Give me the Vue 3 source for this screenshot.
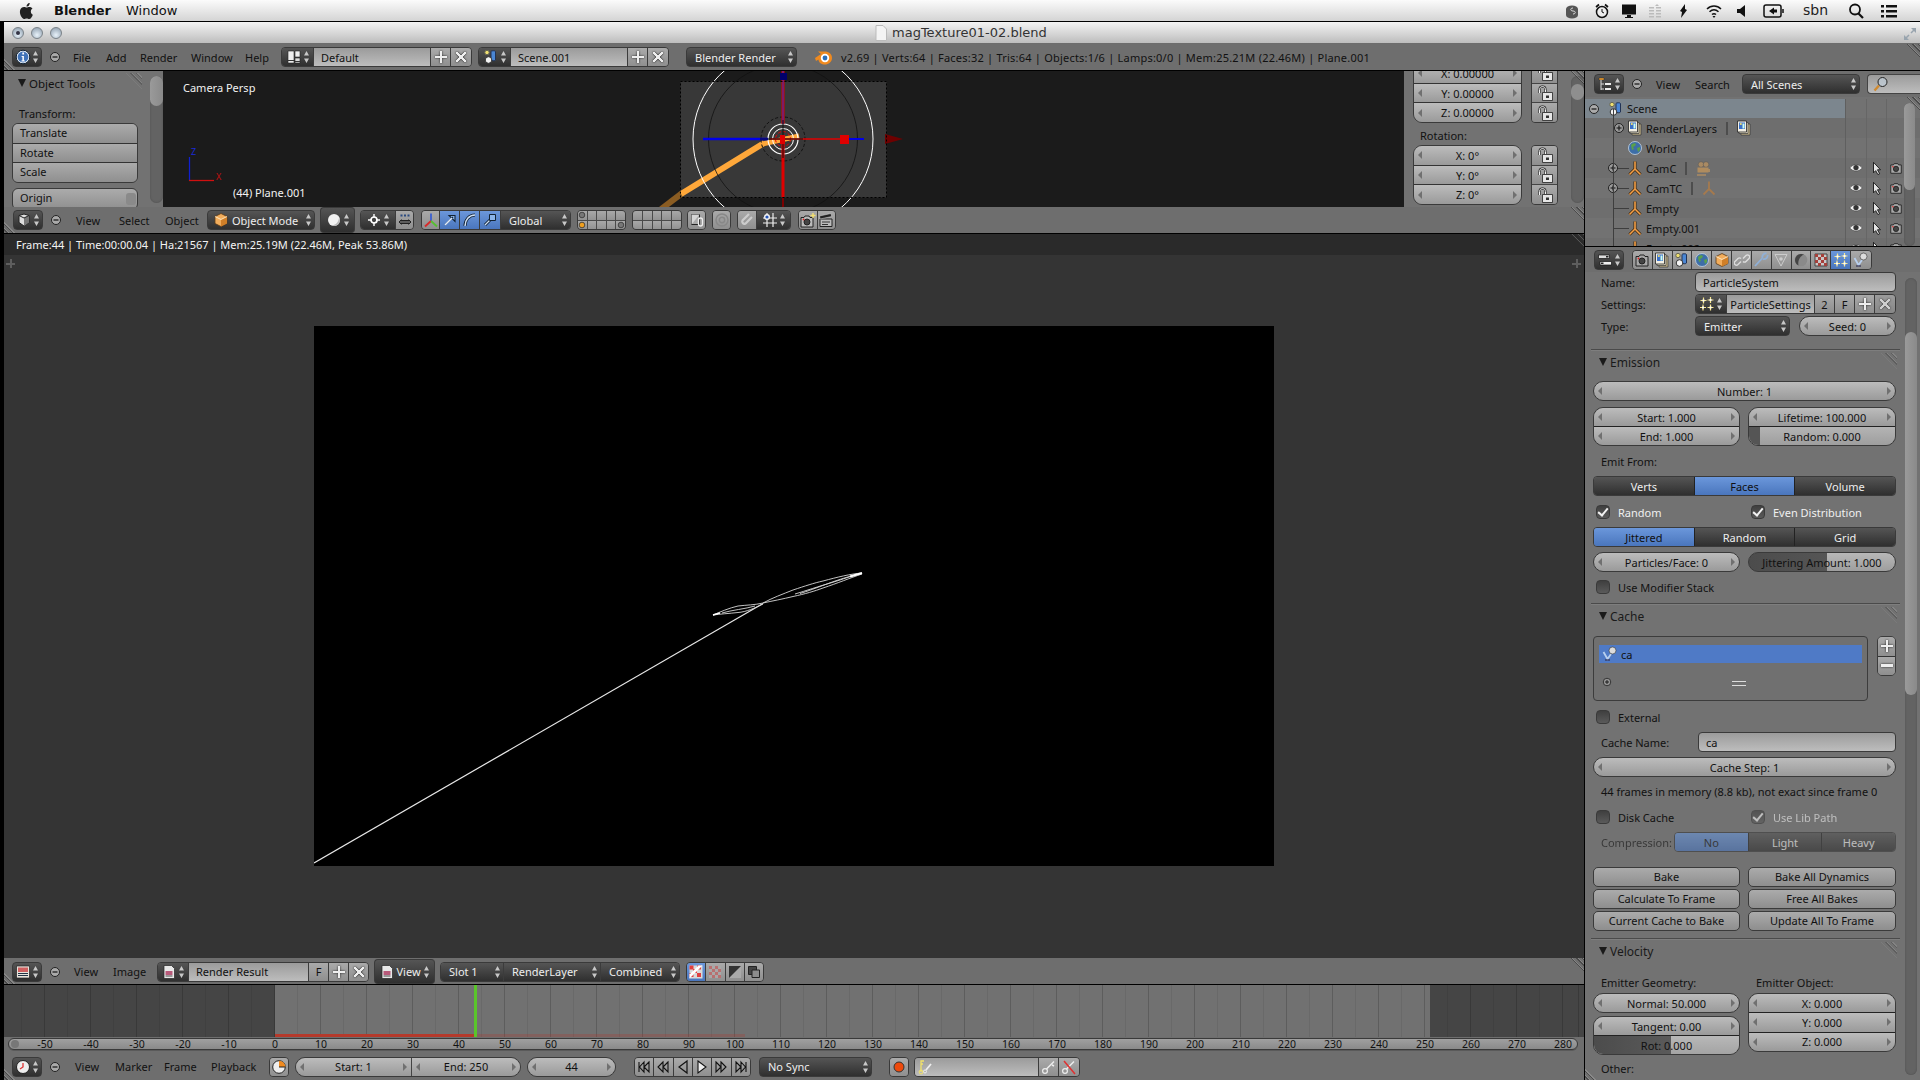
<script setup>
const menus = {
  info: [['File', 33], ['Add', 34], ['Render', 51], ['Window', 54], ['Help', 36]],
  view: [['View', 43], ['Select', 46], ['Object', 42]],
  image: [['View', 39], ['Image', 44]],
  time: [['View', 40], ['Marker', 49], ['Frame', 47], ['Playback', 58]]
}
const locRows = ['X: 0.00000', 'Y: 0.00000', 'Z: 0.00000']
const rotRows = ['X: 0°', 'Y: 0°', 'Z: 0°']
const tree = [
  { name: 'Scene', cls: 'lv0 sel', icon: 'scene', toggle: 'minus' },
  { name: 'RenderLayers', cls: 'lv1', icon: 'layers', toggle: 'plus', extra: 'layers' },
  { name: 'World', cls: 'lv1', icon: 'world' },
  { name: 'CamC', cls: 'lv1 br', icon: 'empty', toggle: 'plus', extra: 'cam', vis: true },
  { name: 'CamTC', cls: 'lv1 br', icon: 'empty', toggle: 'plus', extra: 'emptydim', vis: true },
  { name: 'Empty', cls: 'lv1 br', icon: 'empty', vis: true },
  { name: 'Empty.001', cls: 'lv1 br', icon: 'empty', vis: true },
  { name: 'Empty.002', cls: 'lv1 br', icon: 'empty', vis: true }
]
const tabs = ['render', 'layers', 'scene', 'world', 'cube', 'link', 'wrench', 'vert', 'mat', 'tex', 'spark', 'phys']
const frames = []
for (let f = -50; f <= 280; f += 10) frames.push(f)
const transport = ['first', 'prevkey', 'rev', 'play', 'nextkey', 'last']
const frameCell = 46
</script>

<template>
  <div class="root">
    <svg class="defs" width="0" height="0">
      <defs>
        <symbol id="ud" viewBox="0 0 7 14"><path d="M3.5 1 6 5.5H1zM3.5 13 1 8.5h5z" fill="#c8c8c8"/></symbol>
        <symbol id="info" viewBox="0 0 16 16"><circle cx="8" cy="8" r="6.8" fill="#e9eef5" stroke="#123"/><circle cx="8" cy="8" r="5.4" fill="#3f72b8"/><path d="M6.6 7h2.3v4.4h1v1H6.4v-1h1V8h-.8zM7.3 3.6h1.8v1.8H7.3z" fill="#fff"/></symbol>
        <symbol id="view3d" viewBox="0 0 16 16"><path d="M3 3.5 8 2l5 1.5v7L8 14l-5-3.5z" fill="#ddd" stroke="#222"/><path d="M8 6v8l5-3.5v-7z" fill="#777"/><path d="M3 3.5 8 6l5-2.5" fill="none" stroke="#222"/></symbol>
        <symbol id="layout" viewBox="0 0 16 16"><path d="M2 2h6v12H2z" fill="#eee" stroke="#222" stroke-width=".6"/><path d="M9 2h5v6H9z" fill="#eee" stroke="#222" stroke-width=".6"/><path d="M9 9h5v5H9z" fill="#ddd" stroke="#222" stroke-width=".6"/><path d="M2 11h6v1H2zM9 12h5v1H9z" fill="#333"/></symbol>
        <symbol id="scene" viewBox="0 0 16 16"><circle cx="4" cy="3.5" r="2.2" fill="#f0e070" stroke="#665"/><path d="M8 2.500c0-1 4.500-1 4.500 0V11c0 1-4.500 1-4.500 0z" fill="#4a86d4" stroke="#235"/><circle cx="5.500" cy="11" r="3.300" fill="#f4f4f4" stroke="#333"/></symbol>
        <symbol id="logo" viewBox="0 0 20 18"><path d="M1 10 7 6 4 3.500h6.500C15 3.500 18 6 18 10s-3.500 6.500-7 6.500-6.500-2-6.500-5L2 13z" fill="#f08a1f"/><circle cx="11" cy="10" r="4.200" fill="#fff"/><circle cx="11" cy="10" r="2.400" fill="#2c6fb8"/></symbol>
        <symbol id="cube" viewBox="0 0 16 16"><path d="M8 1.500 14 4.500v7L8 14.500l-6-3v-7z" fill="#f2ad5c" stroke="#5b3a16" stroke-width=".8"/><path d="M8 7.500v7l6-3v-7z" fill="#d07f28"/><path d="M2 4.500l6 3 6-3" fill="none" stroke="#fff3d8" stroke-width=".8"/></symbol>
        <symbol id="ball" viewBox="0 0 16 16"><circle cx="8" cy="8" r="6" fill="#f2f2f2"/><path d="M14 8a6 6 0 0 1-9 5.200C9 13.500 12 11.500 13 6z" fill="#bbb"/></symbol>
        <symbol id="pivot" viewBox="0 0 16 16"><circle cx="8" cy="8" r="3" fill="none" stroke="#fff" stroke-width="1.700"/><path d="M8 2v3.500M8 10.500V14M2 8h3.500M10.500 8H14" stroke="#fff" stroke-width="1.400"/></symbol>
        <symbol id="pickarrows" viewBox="0 0 16 16"><path d="M3.500 2.500h2v2h-2zM7 2.500h2v2H7zM10.500 2.500h2v2h-2z" fill="#2a4a80"/><path d="M2 10h12M4.500 7.500 2 10l2.500 2.500M11.500 7.500 14 10l-2.500 2.500M4 8.500h8M4 11.500h8" stroke="#222" fill="none"/></symbol>
        <symbol id="axes" viewBox="0 0 16 16"><path d="M8 9V1.500" stroke="#3a5fd0" stroke-width="1.800"/><path d="M8 9 2 14.500" stroke="#d82a2a" stroke-width="1.800"/><path d="M8 9 14 14.500" stroke="#55c030" stroke-width="1.800"/></symbol>
        <symbol id="marrow" viewBox="0 0 16 16"><path d="M3 13 11 5M7 3.500h6v6z" stroke="#123" fill="#8ab4ea" stroke-width="1.100"/><path d="M3 13 10 6" stroke="#dfeafa" stroke-width="1.600"/></symbol>
        <symbol id="marc" viewBox="0 0 16 16"><path d="M3 14C3 8 7 3 13 3" fill="none" stroke="#123" stroke-width="3"/><path d="M3 14C3 8 7 3 13 3" fill="none" stroke="#cfe0f6" stroke-width="1.500"/></symbol>
        <symbol id="mscale" viewBox="0 0 16 16"><path d="M3 13 9 7" stroke="#123" stroke-width="3"/><path d="M3 13 9 7" stroke="#cfe0f6" stroke-width="1.300"/><path d="M7.500 2.500h6v6h-6z" fill="#8ab4ea" stroke="#123"/></symbol>
        <symbol id="lockview" viewBox="0 0 16 16"><path d="M2.500 2.500h8v10h-8z" fill="#aaa" stroke="#222"/><path d="M2.500 2.500h8l-8 10z" fill="#d5d5d5"/><rect x="9.500" y="6" width="4" height="8" rx="2" fill="none" stroke="#eee" stroke-width="1.300"/></symbol>
        <symbol id="prop" viewBox="0 0 16 16"><circle cx="8" cy="8" r="6" fill="none" stroke="#888" stroke-width="1.500"/><circle cx="8" cy="8" r="2.700" fill="none" stroke="#888" stroke-width="1.500"/></symbol>
        <symbol id="magnet" viewBox="0 0 16 16"><path d="M12 3 5.500 9.500a2.200 2.200 0 0 0 3 3L15 6" fill="none" stroke="#ccc" stroke-width="2.200" transform="translate(-2 -1)"/></symbol>
        <symbol id="snapgrid" viewBox="0 0 16 16"><path d="M5 1v14M11 1v14M1 6h14M1 11h14" stroke="#eee" stroke-width="1.200"/><circle cx="5" cy="5" r="3" fill="#f2f2f2"/><circle cx="5" cy="5" r="1.600" fill="#2555b8"/></symbol>
        <symbol id="render" viewBox="0 0 16 16"><path d="M2 4.500h3l1-1.500h4l1 1.500h3V14H2z" fill="#a8a8a8" stroke="#222"/><circle cx="8" cy="9" r="3" fill="#444" stroke="#222"/><circle cx="4.500" cy="6.500" r=".9" fill="#d22"/></symbol>
        <symbol id="propsed" viewBox="0 0 16 16"><path d="M1.500 3h11v3.500h-11z" fill="#ddd" stroke="#111" stroke-width=".7"/><path d="M3 9.500h11.500V13H3z" fill="#f0f0f0" stroke="#111" stroke-width=".7"/><path d="M9 4h2.500v1.500H9zM4 10.500h2.500V12H4z" fill="#222"/></symbol>
        <symbol id="renderstar" viewBox="0 0 16 16"><path d="M1 5.500h3l1-1.500h4l1 1.500h3V15H1z" fill="#bbb" stroke="#222"/><circle cx="7" cy="10" r="3" fill="#444" stroke="#222"/><circle cx="3.500" cy="7.500" r=".9" fill="#d22"/><path d="M13 1v5M10.500 3.500h5" stroke="#f4e070" stroke-width="1.400"/></symbol>
        <symbol id="clap" viewBox="0 0 16 16"><path d="M2 7h12v7.500H2z" fill="#bbb" stroke="#222"/><path d="M2 7 1.500 4 13 1.500l.7 3z" fill="#222" stroke="#ddd" stroke-width=".5"/><path d="M4 10h8M4 12.500h6" stroke="#333"/></symbol>
        <symbol id="lock" viewBox="0 0 16 18"><path d="M2.500 9V5.500a3 3 0 0 1 6 0V8" fill="none" stroke="#111" stroke-width="2"/><path d="M2.500 9V5.500a3 3 0 0 1 6 0V8" fill="none" stroke="#f2f2f2" stroke-width="1"/><path d="M5.500 8.500h10v8h-10z" fill="#e6e6e6" stroke="#222" stroke-width=".8"/><rect x="9" y="11.500" width="3" height="2.500" fill="#333"/></symbol>
        <symbol id="oliner" viewBox="0 0 16 16"><path d="M2 2h5v2H2z" fill="#f0a030" stroke="#222" stroke-width=".4"/><path d="M4 4v10M4 8h3M4 13h3" stroke="#ddd"/><path d="M8 7h6v2H8zM8 12h6v2H8z" fill="#eee"/></symbol>
        <symbol id="searchg" viewBox="0 0 16 16"><circle cx="9.500" cy="6" r="4.500" fill="#cde" fill-opacity=".5" stroke="#222"/><path d="M6 9.500 1.500 14.500" stroke="#d08a30" stroke-width="2.400"/></symbol>
        <symbol id="minus" viewBox="0 0 12 12"><circle cx="6" cy="6" r="4.500" fill="#aaa" stroke="#222"/><path d="M3.500 6h5" stroke="#111" stroke-width="1.200"/></symbol>
        <symbol id="plus" viewBox="0 0 12 12"><circle cx="6" cy="6" r="4.500" fill="#999" stroke="#222"/><path d="M3.500 6h5M6 3.500v5" stroke="#111" stroke-width="1.100"/></symbol>
        <symbol id="layers" viewBox="0 0 16 16"><path d="M5 4h9v11H5z" fill="#c9b98d" stroke="#333" stroke-width=".7"/><path d="M3 2.500h9v11H3z" fill="#e7dfc8" stroke="#333" stroke-width=".7"/><path d="M1.500 1h9v11h-9z" fill="#f4f0e4" stroke="#222" stroke-width=".8"/><path d="M3 2.500h6V9H3z" fill="#3a70c8"/><circle cx="4.800" cy="4" r="1.100" fill="#f4e070"/><path d="M6.500 3.500h2v5h-2z" fill="#cfe"/></symbol>
        <symbol id="world" viewBox="0 0 16 16"><circle cx="8" cy="8" r="6.500" fill="#3d6ea8" stroke="#bcd" stroke-width=".9"/><path d="M4 5c2-2 4-2 5-1l-1 2-2 1 1 2-2 1zM10 8l3-1 0 3-2 2z" fill="#5aa14a"/></symbol>
        <symbol id="empty" viewBox="0 0 16 16"><path d="M8 1.500V9L2.500 14.500M8 9l5.500 5.500" fill="none" stroke="#3c2408" stroke-width="3"/><path d="M8 1.500V9L2.500 14.500M8 9l5.500 5.500" fill="none" stroke="#f3a04a" stroke-width="1.600"/></symbol>
        <symbol id="emptydim" viewBox="0 0 16 16"><path d="M8 1.500V9L2.500 14.500M8 9l5.500 5.500" fill="none" stroke="#a57a4e" stroke-width="1.800"/></symbol>
        <symbol id="cam" viewBox="0 0 16 16"><circle cx="6" cy="4.500" r="2.800" fill="#a98a63" stroke="#555" stroke-width=".5"/><circle cx="11" cy="4.500" r="2.800" fill="#a98a63" stroke="#555" stroke-width=".5"/><path d="M2.500 7.500h11v5h-11z" fill="#b08c5e"/><path d="M2 15h9" stroke="#a98a63" stroke-width="1.600"/><path d="M14 9v3" stroke="#a98a63" stroke-width="2"/></symbol>
        <symbol id="eye" viewBox="0 0 16 16"><path d="M1 8c3-5 11-5 14 0-3 4.500-11 4.500-14 0z" fill="#eee" stroke="#222" stroke-width=".5"/><circle cx="8" cy="7.500" r="3" fill="#333"/></symbol>
        <symbol id="cursor" viewBox="0 0 16 16"><path d="M4 1.500 12 10H8.500l2.500 4.500-2 1L6.500 11 4 13.500z" fill="#e4e4e4" stroke="#111"/></symbol>
        <symbol id="link" viewBox="0 0 16 16"><path d="M7 9.500 4 12.500a2.100 2.100 0 0 1-3-3l3-3a2.100 2.100 0 0 1 3 0M9 6.500l3-3a2.100 2.100 0 0 1 3 3l-3 3a2.100 2.100 0 0 1-3 0" fill="none" stroke="#ddd" stroke-width="1.400"/></symbol>
        <symbol id="wrench" viewBox="0 0 16 16"><path d="M2 14 9.500 6M13.500 1.500a3.500 3.500 0 0 0-4 4.500M14.500 3a3.500 3.500 0 0 1-4.500 4" fill="none" stroke="#8fb0d8" stroke-width="1.800"/></symbol>
        <symbol id="vert" viewBox="0 0 16 16"><path d="M2 2.500 8 14 14 2.500z" fill="none" stroke="#ccc"/><circle cx="8" cy="7" r="1.800" fill="#ccc"/><path d="M2 2.500h12" stroke="#ccc"/></symbol>
        <symbol id="mat" viewBox="0 0 16 16"><circle cx="8" cy="8" r="6.300" fill="#8a8a8a"/><path d="M2 8a6.300 6.300 0 0 1 9-5.500C7 4 4.500 9 5.500 13.500A6.300 6.300 0 0 1 2 8z" fill="#444"/></symbol>
        <symbol id="tex" viewBox="0 0 16 16"><path d="M2 2h12v12H2z" fill="#c8c8c8" stroke="#444"/><path d="M2 2h3v3H2zM8 2h3v3H8zM5 5h3v3H5zM11 5h3v3h-3zM2 8h3v3H2zM8 8h3v3H8zM5 11h3v3H5zM11 11h3v3h-3z" fill="#a5403a"/></symbol>
        <symbol id="spark" viewBox="0 0 16 16"><path d="M4.500 1.500v6M1.500 4.500h6M11.500 1v6M8.500 4h6M4 8.500v6M1 11.500h6M11.500 8.500v6M8.500 11.500h6" stroke="#f8e890" stroke-width="1.200"/><path d="M3.500 3.500h2v2h-2zM10.500 3h2v2h-2zM3 10.500h2v2H3zM10.500 10.500h2v2h-2z" fill="#fff"/></symbol>
        <symbol id="phys" viewBox="0 0 16 16"><path d="M1.500 6 5.500 13 9 8" fill="none" stroke="#b8cfee" stroke-width="1.800"/><path d="M3 14h5" stroke="#335" stroke-width="1.200"/><circle cx="10.500" cy="4.500" r="3.500" fill="#dcdcdc" stroke="#333" stroke-width=".6"/></symbol>
        <symbol id="uvimg" viewBox="0 0 16 16"><path d="M1.500 2h13v12h-13z" fill="#e8e4dc" stroke="#222" stroke-width=".7"/><path d="M3 3.500h10V8H3z" fill="#d06060"/><path d="M3 9.500h10M3 11.500h10" stroke="#234" stroke-width="1.200"/></symbol>
        <symbol id="img" viewBox="0 0 16 16"><path d="M3 1.500h7.500L13.500 4.500v10H3z" fill="#e8e8e8" stroke="#222" stroke-width=".7"/><path d="M4.500 7h7v4h-7z" fill="#b85a7a"/><path d="M4.500 12h7" stroke="#444"/></symbol>
        <symbol id="checker" viewBox="0 0 16 16"><path d="M1.500 1.500h13v13h-13z" fill="#d9d9d9"/><path d="M1.500 1.500h4v4h-4zM9 1.500h4v4H9zM5 5h4v4H5zM9 9h4v4H9zM1.500 9h4v4h-4z" fill="#e04040"/><path d="M14.500 1.500 1.500 14.500v-4l9-9z" fill="#fff"/></symbol>
        <symbol id="checker2" viewBox="0 0 16 16"><path d="M2 2h12v12H2z" fill="#a8a8a8"/><path d="M2 2h3v3H2zM8 2h3v3H8zM5 5h3v3H5zM11 5h3v3h-3zM2 8h3v3H2zM8 8h3v3H8zM5 11h3v3H5zM11 11h3v3h-3z" fill="#b87070"/></symbol>
        <symbol id="diag" viewBox="0 0 16 16"><path d="M2 2h12v12H2z" fill="#333"/><path d="M14 2v12H2z" fill="#aaa"/></symbol>
        <symbol id="overlap" viewBox="0 0 16 16"><path d="M2.500 2.500h8v8h-8z" fill="#444" stroke="#222"/><path d="M6 6h7.500v7.500H6z" fill="#8c8c8c" stroke="#222"/></symbol>
        <symbol id="clock" viewBox="0 0 16 16"><circle cx="8" cy="8" r="6.500" fill="#eee" stroke="#222"/><path d="M8 4v4l-3 2" stroke="#d33" stroke-width="1.300" fill="none"/></symbol>
        <symbol id="timer" viewBox="0 0 16 16"><circle cx="8" cy="8" r="6.300" fill="#eee" stroke="#222"/><path d="M8 8V1.700A6.300 6.300 0 0 1 14.300 8z" fill="#f08a1f"/><path d="M8 8h6" stroke="#222"/></symbol>
        <symbol id="rec" viewBox="0 0 16 16"><circle cx="8" cy="8" r="5" fill="#ee4a0c" stroke="#333"/></symbol>
        <symbol id="key" viewBox="0 0 16 16"><circle cx="4" cy="12" r="2.400" fill="none" stroke="#eee" stroke-width="1.200"/><path d="M5.500 10 13 2.500M11 6l2 1" stroke="#eee" stroke-width="1.500"/></symbol>
        <symbol id="keyy" viewBox="0 0 16 16"><path d="M3 13V2h3M3 5h2" stroke="#f2e26a" stroke-width="1.300" fill="none"/><circle cx="3" cy="13" r="1.900" fill="none" stroke="#f2e26a"/><path d="M8 11 13 5" stroke="#eee" stroke-width="1.800"/><circle cx="7" cy="12.500" r="1.500" fill="none" stroke="#eee"/></symbol>
        <symbol id="keyx" viewBox="0 0 16 16"><circle cx="4" cy="12" r="2.400" fill="none" stroke="#eee" stroke-width="1.200"/><path d="M5.500 10 13 2.500" stroke="#eee" stroke-width="1.500"/><path d="M3 2 14 15" stroke="#e03030" stroke-width="1.500"/></symbol>
        <symbol id="first" viewBox="0 0 16 16"><path d="M3 3v10M13 3 8 8l5 5zM8 3 3.500 8 8 13z" fill="none" stroke="#111" stroke-width="1.100"/></symbol>
        <symbol id="prevkey" viewBox="0 0 16 16"><path d="M13 3 8 8l5 5zM8 3 3 8l5 5z" fill="none" stroke="#111" stroke-width="1.100"/></symbol>
        <symbol id="rev" viewBox="0 0 16 16"><path d="M12 2 4 8l8 6z" fill="none" stroke="#111" stroke-width="1.200"/></symbol>
        <symbol id="play" viewBox="0 0 16 16"><path d="M4 2l8 6-8 6z" fill="#eee" stroke="#111" stroke-width="1.100"/></symbol>
        <symbol id="nextkey" viewBox="0 0 16 16"><path d="M3 3l5 5-5 5zM8 3l5 5-5 5z" fill="none" stroke="#111" stroke-width="1.100"/></symbol>
        <symbol id="last" viewBox="0 0 16 16"><path d="M13 3v10M3 3l5 5-5 5zM8 3l4.500 5L8 13z" fill="none" stroke="#111" stroke-width="1.100"/></symbol>
        <symbol id="layerdot" viewBox="0 0 10 10"><circle cx="5" cy="5" r="3.500" fill="#777" stroke="#333"/></symbol>
        <symbol id="layerdoto" viewBox="0 0 10 10"><circle cx="5" cy="5" r="3.500" fill="#f0a020" stroke="#333"/></symbol>
      </defs>
    </svg>

    <header class="mac">
      <svg class="apple" viewBox="0 0 16 18"><path d="M11.800 9.500c0-2 1.600-3 1.700-3-1-1.400-2.400-1.600-2.900-1.600-1.200-.1-2.400.7-3 .7-.6 0-1.600-.7-2.600-.7C3.600 4.900 2.300 5.700 1.600 7c-1.400 2.500-.4 6.100 1 8.100.7 1 1.500 2.100 2.500 2 1-.05 1.400-.65 2.600-.65 1.200 0 1.500.65 2.600.6 1.100 0 1.800-1 2.400-2 .8-1.100 1.100-2.200 1.100-2.300-.05 0-2-.8-2-3.250zM9.900 3.500c.55-.65.9-1.600.8-2.500-.8.03-1.800.53-2.300 1.200-.5.57-1 1.500-.85 2.400.9.07 1.800-.45 2.350-1.100z" fill="#222"/></svg>
      <span class="mac-b">Blender</span>
      <span class="mac-t">Window</span>
      <span class="mac-r">
        <svg class="mi m-s" viewBox="0 0 16 16"><path d="M2 6a5 3 0 0 1 12 0v6a5 3 0 0 1-12 0z" fill="#555"/><path d="M9 5c-3 0-3 3 0 3s3 3 0 3" stroke="#ddd" fill="none"/></svg>
        <svg class="mi m-c" viewBox="0 0 16 16"><circle cx="8" cy="9" r="5.500" fill="#eee" stroke="#111" stroke-width="1.500"/><path d="M8 6v3l2 1" stroke="#111" fill="none"/><path d="M2 4 5 1.500M14 4l-3-2.500" stroke="#111" stroke-width="1.700"/></svg>
        <svg class="mi m-d" viewBox="0 0 16 16"><path d="M1 1.500h14v10H1z" fill="#111"/><path d="M6 12h4v2H6zM4 14h8v1H4z" fill="#111"/></svg>
        <svg class="mi m-b" viewBox="0 0 16 16"><path d="M2 4h5v1.500H2zM9 4h5v1.500H9zM2 7h5v1.500H2zM9 7h5v1.500H9zM2 10h5v1.500H2zM9 10h5v1.500H9zM2 13h5v1.500H2zM9 13h5v1.500H9zM10 1l2 2H8z" fill="#bbb"/></svg>
        <svg class="mi m-f" viewBox="0 0 16 16"><path d="M9 1 4 8l2 1-1 6 6-8-2-1z" fill="#111"/></svg>
        <svg class="mi m-w" viewBox="0 0 18 16"><path d="M2 6c4-4 10-4 14 0M4.500 8.800c2.700-2.500 6.300-2.500 9 0M7 11.500c1.300-1.100 2.700-1.100 4 0" stroke="#111" stroke-width="1.500" fill="none"/><path d="M9 15l-1.500-2h3z" fill="#111"/></svg>
        <svg class="mi m-v" viewBox="0 0 12 16"><path d="M2 6h3l5-4v12l-5-4H2z" fill="#111"/></svg>
        <svg class="mi m-k" viewBox="0 0 22 16"><rect x="1" y="2" width="17" height="12" rx="2" fill="none" stroke="#111" stroke-width="1.500"/><path d="M20 6v4" stroke="#111" stroke-width="1.500"/><path d="M6 8l5-3.500v2h3v3h-3v2z" fill="#111"/></svg>
        <span class="m-n">sbn</span>
        <svg class="mi m-q" viewBox="0 0 16 16"><circle cx="7" cy="6.500" r="5" fill="none" stroke="#111" stroke-width="1.800"/><path d="M10.500 10.500 15 15" stroke="#111" stroke-width="2.200"/></svg>
        <svg class="mi m-l" viewBox="0 0 18 16"><path d="M1 2h3v2.500H1zM1 7h3v2.500H1zM1 12h3v2.500H1zM6 2h11v2.500H6zM6 7h11v2.500H6zM6 12h11v2.500H6z" fill="#111"/></svg>
      </span>
    </header>

    <div class="win">
      <div class="title">
        <span class="lights"><i class="l on"></i><i class="l"></i><i class="l"></i></span>
        <span class="title-c">
          <svg class="doc" viewBox="0 0 12 16"><path d="M1 .5h7l3.500 3.500v11.500H1z" fill="#f4f4f4" stroke="#bbb"/></svg>
          <span>magTexture01-02.blend</span>
        </span>
        <svg class="full" viewBox="0 0 16 16"><path d="M9 2h5v5zM7 14H2V9z" fill="#98a4ae"/><path d="M12 4 9 7M4 12l3-3" stroke="#98a4ae" stroke-width="1.500"/></svg>
      </div>

      <div class="hdr h-info">
        <div class="hatch-l"></div>
        <div class="grp dk w30 ml8"><svg class="i"><use href="#info"/></svg><svg class="ud"><use href="#ud"/></svg></div>
        <span class="dotcell w31"><svg class="dot"><use href="#minus"/></svg></span>
        <span v-for="m in menus.info" :key="m[0]" class="menu" :style="{ width: m[1] + 'px' }">{{ m[0] }}</span>
        <div class="grp w191">
          <div class="dk seg w32"><svg class="i"><use href="#layout"/></svg><svg class="ud"><use href="#ud"/></svg></div>
          <div class="fld seg grow"><span class="pl8">Default</span></div>
          <div class="btn seg w20"><b class="add"></b></div>
          <div class="btn seg w20"><b class="x"></b></div>
        </div>
        <div class="grp w191 ml6">
          <div class="dk seg w32"><svg class="i"><use href="#scene"/></svg><svg class="ud"><use href="#ud"/></svg></div>
          <div class="fld seg grow"><span class="pl8">Scene.001</span></div>
          <div class="btn seg w20"><b class="add"></b></div>
          <div class="btn seg w20"><b class="x"></b></div>
        </div>
        <div class="grp dk w111 ml17 drop"><span>Blender Render</span><svg class="ud"><use href="#ud"/></svg></div>
        <svg class="logo"><use href="#logo"/></svg>
        <span class="stats">v2.69 | Verts:64 | Faces:32 | Tris:64 | Objects:1/6 | Lamps:0/0 | Mem:25.21M (22.46M) | Plane.001</span>
        <div class="hatch-r"></div>
      </div>

      <div class="body">
        <div class="left">
          <section class="v3d">
            <div class="v-main">
              <aside class="tools">
                <div class="tools-in">
                  <div class="pan-h"><i class="tri"></i><span>Object Tools</span><div class="hatch-p"></div></div>
                  <div class="lbl t-lbl">Transform:</div>
                  <div class="stack btns">
                    <div class="tb">Translate</div><div class="tb">Rotate</div><div class="tb">Scale</div>
                  </div>
                  <div class="tb origin">Origin<b class="orig-plus"></b></div>
                </div>
                <div class="sbar"><i class="sthumb st-tool"></i></div>
              </aside>
              <div class="vp">
                <span class="vp-t">Camera Persp</span>
                <svg class="vp-svg" width="1241" height="136" viewBox="163 71 1241 136">
                  <rect x="680.500" y="81.500" width="206" height="116" fill="#383838"/>
                  <path d="M660 210 681 194" stroke="#8a5c22" stroke-width="6"/>
                  <path d="M681 194 764 143" stroke="#ffa83a" stroke-width="6"/>
                  <path d="M762 144 799 136" stroke="#ffa83a" stroke-width="5"/>
                  <circle cx="783" cy="139" r="90" fill="none" stroke="#fff" stroke-width="1"/>
                  <circle cx="783" cy="139" r="74.500" fill="none" stroke="#111" stroke-width=".8"/>
                  <circle cx="783" cy="139" r="22" fill="none" stroke="#111" stroke-width="1" stroke-dasharray="3 2"/>
                  <circle cx="783" cy="139" r="15" fill="none" stroke="#fff" stroke-width="1.200"/>
                  <circle cx="783" cy="139" r="10.500" fill="none" stroke="#fff" stroke-width="1"/>
                  <circle cx="783" cy="139" r="7.500" fill="none" stroke="#e00" stroke-width="1" stroke-dasharray="3 2"/>
                  <path d="M783 139V197" stroke="#e00000" stroke-width="3"/>
                  <path d="M783 197V207" stroke="#7a0000" stroke-width="2"/>
                  <path d="M783 71V124" stroke="#e00000" stroke-width="3"/>
                  <path d="M783 71V124" stroke="#2030d0" stroke-width="1"/>
                  <path d="M783 120V158" stroke="#111" stroke-width="1"/>
                  <rect x="780" y="73" width="7" height="7" fill="#00006a"/>
                  <path d="M703 139H768" stroke="#0000e8" stroke-width="2.500"/>
                  <path d="M770 139H864" stroke="#e00000" stroke-width="1.500"/>
                  <path d="M849 139H864" stroke="#0000e8" stroke-width="2"/>
                  <path d="M760 139H803" stroke="#111" stroke-width="1"/>
                  <rect x="840" y="135" width="9" height="9" fill="#e00000"/>
                  <rect x="780" y="135" width="5" height="9" fill="#e00000"/>
                  <path d="M885 134V144L903 139z" fill="#6e0000"/>
                  <rect x="680.500" y="81.500" width="206" height="116" fill="none" stroke="#000" stroke-dasharray="2 2"/>
                  <path d="M189.500 157V180.500" stroke="#1020d0" stroke-width="1.300"/>
                  <path d="M189 180.500H214" stroke="#d01010" stroke-width="1.300"/>
                </svg>
                <span class="ax ax-z">Z</span>
                <span class="ax ax-x">X</span>
                <span class="vp-o">(44) Plane.001</span>
              </div>
              <aside class="npanel">
                <div class="np-in">
                  <div class="np-row">
                    <div class="stack np-stack">
                      <div v-for="r in locRows" :key="r" class="num"><span>{{ r }}</span></div>
                    </div>
                    <div class="stack locks">
                      <div v-for="r in locRows" :key="r" class="lk"><svg class="ilk"><use href="#lock"/></svg></div>
                    </div>
                  </div>
                  <div class="lbl np-lbl">Rotation:</div>
                  <div class="np-row">
                    <div class="stack np-stack">
                      <div v-for="r in rotRows" :key="r" class="num"><span>{{ r }}</span></div>
                    </div>
                    <div class="stack locks">
                      <div v-for="r in rotRows" :key="r" class="lk"><svg class="ilk"><use href="#lock"/></svg></div>
                    </div>
                  </div>
                </div>
                <div class="sbar sb-n"><i class="sthumb st-n"></i></div>
                <div class="hatch-c"></div>
              </aside>
            </div>
            <div class="hdr h-3d">
              <div class="hatch-l"></div>
              <div class="grp dk w30 ml9"><svg class="i"><use href="#view3d"/></svg><svg class="ud"><use href="#ud"/></svg></div>
              <span class="dotcell w33"><svg class="dot"><use href="#minus"/></svg></span>
              <span v-for="m in menus.view" :key="m[0]" class="menu" :style="{ width: m[1] + 'px' }">{{ m[0] }}</span>
              <div class="grp dk w108 drop dm"><svg class="i"><use href="#cube"/></svg><span class="grow pl3">Object Mode</span><svg class="ud"><use href="#ud"/></svg></div>
              <div class="grp dk w35 ml5 seg"><svg class="i"><use href="#ball"/></svg><svg class="ud"><use href="#ud"/></svg></div>
              <div class="grp w54 ml5">
                <div class="dk seg w35"><svg class="i"><use href="#pivot"/></svg><svg class="ud"><use href="#ud"/></svg></div>
                <div class="btn seg grow"><svg class="i"><use href="#pickarrows"/></svg></div>
              </div>
              <div class="grp w150 ml7">
                <div class="btn seg w18"><svg class="i"><use href="#axes"/></svg></div>
                <div class="blue seg w20"><svg class="i"><use href="#marrow"/></svg></div>
                <div class="blue seg w20"><svg class="i"><use href="#marc"/></svg></div>
                <div class="blue seg w21"><svg class="i"><use href="#mscale"/></svg></div>
                <div class="dk seg grow drop"><span>Global</span><svg class="ud"><use href="#ud"/></svg></div>
              </div>
              <div class="lay w49 ml6">
                <i class="c"><svg class="i8"><use href="#layerdot"/></svg></i><i class="c"></i><i class="c"></i><i class="c"></i><i class="c"></i>
                <i class="c"><svg class="i8"><use href="#layerdoto"/></svg></i><i class="c"></i><i class="c"></i><i class="c"></i><i class="c"><svg class="i8"><use href="#layerdot"/></svg></i>
              </div>
              <div class="lay w50 ml6">
                <i class="c" v-for="n in 10" :key="n"></i>
              </div>
              <div class="grp w19 ml5"><div class="btn seg grow"><svg class="i"><use href="#lockview"/></svg></div></div>
              <div class="grp w19 ml6"><div class="btn seg grow"><svg class="i"><use href="#prop"/></svg></div></div>
              <div class="grp w54 ml6">
                <div class="btn seg w19"><svg class="i"><use href="#magnet"/></svg></div>
                <div class="dk seg grow"><svg class="i"><use href="#snapgrid"/></svg><svg class="ud"><use href="#ud"/></svg></div>
              </div>
              <div class="grp w38 ml7">
                <div class="btn seg grow"><svg class="i"><use href="#renderstar"/></svg></div>
                <div class="btn seg grow"><svg class="i"><use href="#clap"/></svg></div>
              </div>
              <div class="hatch-r"></div>
            </div>
          </section>

          <section class="img">
            <div class="img-bar">Frame:44 | Time:00:00.04 | Ha:21567 | Mem:25.19M (22.46M, Peak 53.86M)</div>
            <i class="cplus cp-l"></i><i class="cplus cp-r"></i>
            <div class="img-c">
              <svg class="result" width="960" height="540" viewBox="314 326 960 540">
                <rect x="314" y="326" width="960" height="540" fill="#000"/>
                <path d="M314 863 763 603.500" fill="none" stroke="#e8e8e8" stroke-width="1.200"/>
                <g fill="none" stroke="#d8d8d8" stroke-width=".9">
                  <path d="M763 603C772 598 783 594 793 590C805 586 814 583 823 581C838 577 850 574 862 573"/>
                  <path d="M763 603C772 601 783 599 793 596.500C805 594 815 591 823 588C838 583 850 578 862 574"/>
                  <path d="M795 594C805 591 820 586 832 582.500S850 576 862 573.500"/>
                  <path d="M800 593.500C815 589 835 580 855 575"/>
                  <path d="M763 603C755 605 746 605 738 606C729 608 720 612 713 615"/>
                  <path d="M763 604C755 608 746 612 738 612.500C729 613.500 720 614 713 615"/>
                  <path d="M722 613C732 610 745 609 755 606"/>
                </g>
                <path d="M850 576.500 862 573" stroke="#fff" stroke-width="2.200"/>
                <path d="M713 615 720 613" stroke="#fff" stroke-width="1.600"/>
              </svg>
            </div>
            <div class="hatch-i"></div>
          </section>
          <div class="hdr h-img">
            <div class="hatch-l"></div>
            <div class="grp dk w30 ml8"><svg class="i"><use href="#uvimg"/></svg><svg class="ud"><use href="#ud"/></svg></div>
            <span class="dotcell w32"><svg class="dot"><use href="#minus"/></svg></span>
            <span v-for="m in menus.image" :key="m[0]" class="menu" :style="{ width: m[1] + 'px' }">{{ m[0] }}</span>
            <div class="grp w212">
              <div class="dk seg w31"><svg class="i"><use href="#img"/></svg><svg class="ud"><use href="#ud"/></svg></div>
              <div class="fld seg w120"><span class="pl8">Render Result</span></div>
              <div class="btn seg w20"><span>F</span></div>
              <div class="btn seg w20"><b class="add"></b></div>
              <div class="btn seg grow"><b class="x"></b></div>
            </div>
            <div class="grp dk w61 ml5 seg"><svg class="i"><use href="#img"/></svg><span class="wt">View</span><svg class="ud"><use href="#ud"/></svg></div>
            <div class="grp w240 ml5">
              <div class="dk seg w63 drop"><span>Slot 1</span><svg class="ud"><use href="#ud"/></svg></div>
              <div class="dk seg w97 drop"><span>RenderLayer</span><svg class="ud"><use href="#ud"/></svg></div>
              <div class="dk seg grow drop"><span>Combined</span><svg class="ud"><use href="#ud"/></svg></div>
            </div>
            <div class="grp w78 ml6">
              <div class="blue seg grow"><svg class="i"><use href="#checker"/></svg></div>
              <div class="btn seg grow"><svg class="i"><use href="#checker2"/></svg></div>
              <div class="btn seg grow"><svg class="i"><use href="#diag"/></svg></div>
              <div class="btn seg grow"><svg class="i"><use href="#overlap"/></svg></div>
            </div>
            <div class="hatch-r"></div>
          </div>

          <section class="time">
            <div class="tl">
              <i class="tl-dk tl-a"></i><i class="tl-mid"></i><i class="tl-dk tl-b"></i>
              <i class="tl-grid"></i>
              <i class="tl-bar"></i><i class="tl-fade"></i><i class="tl-cur"></i>
            </div>
            <div class="ruler-wrap">
              <div class="ruler">
                <span v-for="f in frames" :key="f" class="tick" :style="{ width: frameCell + 'px' }">{{ f }}</span>
              </div>
            </div>
            <div class="hdr h-time">
              <div class="hatch-l"></div>
              <div class="grp dk w30 ml8"><svg class="i"><use href="#clock"/></svg><svg class="ud"><use href="#ud"/></svg></div>
              <span class="dotcell w33"><svg class="dot"><use href="#minus"/></svg></span>
              <span v-for="m in menus.time" :key="m[0]" class="menu" :style="{ width: m[1] + 'px' }">{{ m[0] }}</span>
              <div class="grp w20"><div class="btn seg grow"><svg class="i"><use href="#timer"/></svg></div></div>
              <div class="numg w226 ml6">
                <div class="num inl w116"><span>Start: 1</span></div>
                <div class="num inl grow"><span>End: 250</span></div>
              </div>
              <div class="numg w89 ml6"><div class="num inl grow"><span>44</span></div></div>
              <div class="grp w117 ml18">
                <div v-for="t in transport" :key="t" class="btn seg grow"><svg class="i"><use :href="'#' + t"/></svg></div>
              </div>
              <div class="grp dk w113 ml8 drop"><span>No Sync</span><svg class="ud"><use href="#ud"/></svg></div>
              <div class="grp w20 ml17"><div class="btn seg grow"><svg class="i"><use href="#rec"/></svg></div></div>
              <div class="grp w166 ml5">
                <div class="fld seg grow ks"><svg class="i"><use href="#keyy"/></svg></div>
                <div class="btn seg w20"><svg class="i"><use href="#key"/></svg></div>
                <div class="btn seg w20"><svg class="i"><use href="#keyx"/></svg></div>
              </div>
            </div>
          </section>
        </div>

        <div class="right">
          <section class="outl">
            <div class="hdr h-ol">
              <div class="grp dk w30 ml9"><svg class="i"><use href="#oliner"/></svg><svg class="ud"><use href="#ud"/></svg></div>
              <span class="dotcell w32"><svg class="dot"><use href="#minus"/></svg></span>
              <span class="menu w39">View</span>
              <span class="menu w47">Search</span>
              <div class="grp dk w118 drop"><span>All Scenes</span><svg class="ud"><use href="#ud"/></svg></div>
              <div class="search"><svg class="i"><use href="#searchg"/></svg></div>
            </div>
            <div class="tree">
              <div v-for="r in tree" :key="r.name" class="tr" :class="r.cls">
                <svg v-if="r.toggle" class="tg"><use :href="'#' + r.toggle"/></svg>
                <svg class="i main"><use :href="'#' + r.icon"/></svg>
                <span class="tn">{{ r.name }}</span>
                <template v-if="r.extra"><i class="tsep"></i><svg class="i"><use :href="'#' + r.extra"/></svg></template>
                <div class="cols">
                  <span v-if="r.vis" class="colc"><svg class="i14"><use href="#eye"/></svg></span>
                  <span v-if="r.vis" class="colc"><svg class="i14"><use href="#cursor"/></svg></span>
                  <span v-if="r.vis" class="colc c3"><svg class="i14"><use href="#render"/></svg></span>
                </div>
              </div>
              <div class="sbar sb-o"><i class="sthumb st-o"></i></div>
              <div class="hatch-c"></div>
            </div>
          </section>

          <section class="props">
            <div class="hdr h-pr">
              <div class="grp dk w30 ml9"><svg class="i"><use href="#propsed"/></svg><svg class="ud"><use href="#ud"/></svg></div>
              <div class="grp tabs ml8">
                <div v-for="t in tabs" :key="t" class="seg tab" :class="t === 'spark' ? 'blue' : 'btn'"><svg class="i"><use :href="'#' + t"/></svg></div>
              </div>
            </div>
            <div class="pp">
              <div class="r lr"><span class="k">Name:</span><div class="fld f-name">ParticleSystem</div></div>
              <div class="r lr mt2"><span class="k">Settings:</span>
                <div class="grp f-name">
                  <div class="dk seg w31"><svg class="i"><use href="#spark"/></svg><svg class="ud"><use href="#ud"/></svg></div>
                  <div class="fld seg grow ctr">ParticleSettings</div>
                  <div class="btn seg w20"><span>2</span></div>
                  <div class="btn seg w20"><span>F</span></div>
                  <div class="btn seg w20"><b class="add"></b></div>
                  <div class="btn seg w20 dimmed"><b class="x"></b></div>
                </div>
              </div>
              <div class="r lr mt2"><span class="k">Type:</span>
                <div class="grp dk w95 drop"><span>Emitter</span><svg class="ud"><use href="#ud"/></svg></div>
                <div class="num w97 ml9"><span>Seed: 0</span></div>
              </div>

              <div class="sec s-em">
                <div class="sec-h"><i class="tri"></i><span>Emission</span><div class="hatch-p"></div></div>
                <div class="num w303 mt7"><span>Number: 1</span></div>
                <div class="cols2 mt6">
                  <div class="stack h39"><div class="num"><span>Start: 1.000</span></div><div class="num"><span>End: 1.000</span></div></div>
                  <div class="stack h39"><div class="num"><span>Lifetime: 100.000</span></div><div class="num sl sl-r"><span>Random: 0.000</span></div></div>
                </div>
                <div class="r lbl-r mt5"><span class="k">Emit From:</span></div>
                <div class="rb mt5"><div class="dk seg grow">Verts</div><div class="blue seg grow dt">Faces</div><div class="dk seg grow">Volume</div></div>
                <div class="cols2 mt6 h20">
                  <div class="chk on"><i class="box"></i><span>Random</span></div>
                  <div class="chk on"><i class="box"></i><span>Even Distribution</span></div>
                </div>
                <div class="rb mt5"><div class="blue seg grow dt">Jittered</div><div class="dk seg grow">Random</div><div class="dk seg grow">Grid</div></div>
                <div class="cols2 mt5">
                  <div class="num"><span>Particles/Face: 0</span></div>
                  <div class="num sl sl-j"><span>Jittering Amount: 1.000</span></div>
                </div>
                <div class="chk dkt mt5"><i class="box"></i><span>Use Modifier Stack</span></div>
              </div>

              <div class="sec s-ca">
                <div class="sec-h"><i class="tri"></i><span>Cache</span><div class="hatch-p"></div></div>
                <div class="list-r mt8">
                  <div class="list">
                    <div class="li"><svg class="i"><use href="#phys"/></svg><span>ca</span></div>
                    <div class="lf"><svg class="lfp"><use href="#plus"/></svg><i class="grip"></i></div>
                  </div>
                  <div class="stack pm"><div class="btn seg grow"><b class="add"></b></div><div class="btn seg grow"><b class="sub"></b></div></div>
                </div>
                <div class="chk dkt mt6"><i class="box"></i><span>External</span></div>
                <div class="r lr mt5"><span class="k">Cache Name:</span><div class="fld f-cn">ca</div></div>
                <div class="num w303 mt5"><span>Cache Step: 1</span></div>
                <div class="note">44 frames in memory (8.8 kb), not exact since frame 0</div>
                <div class="cols2 h20 mt5">
                  <div class="chk dkt"><i class="box"></i><span>Disk Cache</span></div>
                  <div class="chk on dis"><i class="box"></i><span>Use Lib Path</span></div>
                </div>
                <div class="r lr mt5 dis">
                  <span class="k k-c">Compression:</span>
                  <div class="rb comp"><div class="blue seg grow dt">No</div><div class="dk seg grow">Light</div><div class="dk seg grow">Heavy</div></div>
                </div>
                <div class="cols2 mt15"><div class="pb">Bake</div><div class="pb">Bake All Dynamics</div></div>
                <div class="cols2 mt2"><div class="pb">Calculate To Frame</div><div class="pb">Free All Bakes</div></div>
                <div class="cols2 mt2"><div class="pb">Current Cache to Bake</div><div class="pb">Update All To Frame</div></div>
              </div>

              <div class="sec s-ve">
                <div class="sec-h"><i class="tri"></i><span>Velocity</span><div class="hatch-p"></div></div>
                <div class="cols2 mt-l"><div class="k kk">Emitter Geometry:</div><div class="k kk">Emitter Object:</div></div>
                <div class="cols2 vel">
                  <div class="vel-l">
                    <div class="num"><span>Normal: 50.000</span></div>
                    <div class="stack h39 mt3"><div class="num"><span>Tangent: 0.00</span></div><div class="num sl sl-t"><span>Rot: 0.000</span></div></div>
                  </div>
                  <div class="stack h59"><div class="num"><span>X: 0.000</span></div><div class="num"><span>Y: 0.000</span></div><div class="num"><span>Z: 0.000</span></div></div>
                </div>
                <div class="k kk mt-o">Other:</div>
              </div>
            </div>
            <div class="sbar sb-p"><i class="sthumb st-p"></i></div>
            <div class="hatch-bl"></div>
          </section>
        </div>
      </div>
    </div>
  </div>
</template>

<style>
html, body { margin: 0; background: #000; }
</style>

<style scoped>
.root { width: 1920px; height: 1080px; overflow: hidden; display: flex; flex-direction: column; font-family: "Noto Sans", "Open Sans", sans-serif; font-size: 11px; color: #111; position: relative; }
.defs { position: absolute; }
.mac { height: 21px; flex: none; display: flex; align-items: center; background: linear-gradient(#fbfbfb, #d4d4d4); border-bottom: 1px solid #000; font-family: "DejaVu Sans", sans-serif; box-sizing: content-box; position: relative; }
.apple { width: 16px; height: 18px; margin-left: 19px; }
.mac-b { font-weight: 700; font-size: 13px; margin-left: 19px; color: #111; width: 72px; }
.mac-t { font-size: 13px; color: #111; }
.mac-r { display: flex; align-items: center; position: absolute; left: 0; top: 0; width: 1920px; height: 21px; pointer-events: none; }
.mi { height: 16px; width: 16px; position: absolute; top: 3px; }
.m-s { left: 1564px; } .m-c { left: 1594px; } .m-d { left: 1621px; } .m-b { left: 1647px; } .m-f { left: 1676px; } .m-w { left: 1705px; width: 18px; } .m-v { left: 1735px; width: 12px; } .m-k { left: 1763px; width: 22px; } .m-q { left: 1848px; } .m-l { left: 1880px; width: 18px; }
.m-n { position: absolute; left: 1803px; top: 2px; font-size: 14px; color: #222; }
.win { flex: 1; min-height: 0; display: flex; flex-direction: column; border-left: 4px solid #000; background: #000; }
.title { height: 22px; flex: none; display: flex; align-items: center; position: relative; background: linear-gradient(#f4f4f4, #bdbdbd); border-bottom: 1px solid #6d6d6d; box-sizing: border-box; }
.lights { display: flex; gap: 7px; margin-left: 8px; }
.l { width: 12px; height: 12px; border-radius: 50%; background: radial-gradient(circle at 50% 70%, #e8f2fa, #8898a8); border: 1px solid #7a8288; box-sizing: border-box; position: relative; display: block; }
.l.on::after { content: ""; position: absolute; left: 3px; top: 3px; width: 4px; height: 4px; border-radius: 50%; background: #334; }
.title-c { position: absolute; left: 871px; top: 0; height: 21px; display: flex; align-items: center; font-family: "DejaVu Sans", sans-serif; font-size: 13px; color: #333; gap: 5px; }
.doc { width: 12px; height: 16px; }
.full { position: absolute; left: 1898px; top: 4px; width: 16px; height: 16px; }

.hdr { height: 26px; flex: none; display: flex; align-items: center; background: #6e6e6e; position: relative; font-size: 11px; }
.h-info { height: 27px; border-bottom: 1px solid #000; box-sizing: border-box; }
.body { flex: 1; min-height: 0; display: flex; }
.left { width: 1580px; flex: none; display: flex; flex-direction: column; }
.right { width: 335px; flex: none; margin-left: 1px; display: flex; flex-direction: column; }

.grp { height: 20px; display: flex; border: 1px solid #3a3a3a; border-radius: 4px; overflow: hidden; box-sizing: border-box; flex: none; }
.seg { display: flex; align-items: center; justify-content: center; height: 100%; box-sizing: border-box; border-right: 1px solid #3c3c3c; min-width: 0; }
.seg:last-child { border-right: 0; }
.grow { flex: 1; min-width: 0; }
.dk { background: linear-gradient(#555, #2f2f2f); color: #eee; display: flex; align-items: center; justify-content: center; }
.grp.dk { justify-content: center; }
.btn { background: linear-gradient(#aaa, #8f8f8f); color: #111; }
.blue { background: linear-gradient(#6b97db, #4a76bd); color: #eee; }
.dt { color: #111; }
.fld { background: linear-gradient(#9b9b9b, #bdbdbd); color: #111; justify-content: flex-start; }
.drop { justify-content: space-between; padding: 0 2px 0 8px; }
.drop.dk { justify-content: space-between; }
.drop > span:not(.grow) { flex: 1; }
.dm { padding-left: 5px; }
.i { width: 16px; height: 16px; flex: none; }
.i14 { width: 14px; height: 14px; }
.ilk { width: 16px; height: 18px; }
.i8 { width: 8px; height: 8px; display: block; }
.ud { width: 7px; height: 14px; flex: none; margin-left: 1px; }
.dot { width: 12px; height: 12px; }
.dotcell { display: flex; justify-content: flex-start; padding-left: 7px; box-sizing: border-box; flex: none; }
.menu { color: #111; padding-left: 0; flex: none; white-space: nowrap; }
.pl8 { padding-left: 7px; } .pl3 { padding-left: 3px; text-align: left; }
.wt { color: #eee; margin: 0 1px; }
.w18{width:18px}.w19{width:19px}.w20{width:20px}.w21{width:21px}.w30{width:30px}.w31{width:31px}.w32{width:32px}.w33{width:33px}.w35{width:35px}.w38{width:38px}.w39{width:39px}.w47{width:47px}.w49{width:49px}.w50{width:50px}.w54{width:54px}.w61{width:61px}.w63{width:63px}.w78{width:78px}.w89{width:89px}.w95{width:95px}.w97{width:97px}.w108{width:108px}.w111{width:111px}.w113{width:113px}.w116{width:116px}.w117{width:117px}.w118{width:118px}.w120{width:120px}.w150{width:150px}.w166{width:166px}.w191{width:191px}.w212{width:212px}.w226{width:226px}.w240{width:240px}.w303{width:303px}
.ml5{margin-left:5px}.ml6{margin-left:6px}.ml7{margin-left:7px}.ml8{margin-left:8px}.ml9{margin-left:9px}.ml17{margin-left:17px}.ml18{margin-left:18px}
.mt2{margin-top:2px}.mt3{margin-top:3px}.mt5{margin-top:5px}.mt6{margin-top:6px}.mt7{margin-top:7px}.mt8{margin-top:8px}.mt15{margin-top:15px}

.lay { height: 20px; flex: none; display: grid; grid-template-columns: repeat(5, 1fr); grid-template-rows: 1fr 1fr; border: 1px solid #3a3a3a; border-radius: 4px; overflow: hidden; box-sizing: border-box; background: #4a4a4a; gap: 1px; }
.c { background: linear-gradient(#a8a8a8, #929292); display: flex; align-items: center; justify-content: center; min-width: 0; min-height: 0; overflow: hidden; }

b.add, b.x, b.sub { display: block; width: 12px; height: 12px; position: relative; }
b.add { background: linear-gradient(#eee, #eee) center/12px 2px no-repeat, linear-gradient(#eee, #eee) center/2px 12px no-repeat; filter: drop-shadow(0 0 1px #222); }
b.x { width: 10px; height: 10px; background: linear-gradient(45deg, transparent 42%, #eee 42%, #eee 58%, transparent 58%), linear-gradient(-45deg, transparent 42%, #eee 42%, #eee 58%, transparent 58%); filter: drop-shadow(0 0 1px #222); }
b.sub { background: linear-gradient(#eee, #eee) center/12px 3px no-repeat; filter: drop-shadow(0 0 1px #222); }
.dimmed { opacity: .75; }
.logo { width: 20px; height: 18px; margin-left: 17px; flex: none; }
.stats { margin-left: 7px; color: #111; white-space: nowrap; letter-spacing: .02em; }

.hatch-l, .hatch-r, .hatch-p, .hatch-c, .hatch-i, .hatch-bl { position: absolute; width: 14px; height: 14px; background: repeating-linear-gradient(45deg, transparent 0 2px, rgba(50,50,50,.6) 2px 3px, rgba(190,190,190,.3) 3px 4px); pointer-events: none; }
.hatch-l { left: 0; bottom: 0; clip-path: polygon(0 0, 100% 100%, 0 100%); }
.hatch-r { right: 0; top: 0; clip-path: polygon(0 0, 100% 0, 100% 100%); }
.hatch-p { right: 8px; top: 2px; background: repeating-linear-gradient(45deg, transparent 0 2px, rgba(60,60,60,.35) 2px 3px, rgba(170,170,170,.3) 3px 4px); width: 16px; height: 16px; clip-path: polygon(0 0, 100% 0, 100% 100%); }
.hatch-c { right: 0; top: 0; clip-path: polygon(0 0, 100% 0, 100% 100%); }
.hatch-i { right: 0; top: 0; clip-path: polygon(0 0, 100% 0, 100% 100%); }
.hatch-bl { left: 0; bottom: 0; clip-path: polygon(0 0, 100% 100%, 0 100%); }

.v3d { height: 162px; flex: none; display: flex; flex-direction: column; border-bottom: 1px solid #000; box-sizing: content-box; }
.v-main { height: 136px; flex: none; display: flex; }
.tools { width: 159px; flex: none; display: flex; background: #727272; overflow: hidden; position: relative; }
.tools-in { width: 142px; padding-left: 8px; box-sizing: border-box; flex: none; position: relative; }
.pan-h { height: 24px; display: flex; align-items: center; font-size: 11.500px; color: #111; position: relative; gap: 3px; padding-left: 6px; }
.tri { width: 0; height: 0; border-left: 4px solid transparent; border-right: 4px solid transparent; border-top: 8px solid #1a1a1a; display: block; }
.pan-h .hatch-p { right: 4px; top: 2px; }
.lbl { color: #111; }
.t-lbl { height: 18px; line-height: 18px; margin-top: 10px; padding-left: 7px; }
.stack { display: flex; flex-direction: column; border-radius: 9px; }
.btns { width: 126px; border: 1px solid #3a3a3a; border-radius: 6px; overflow: hidden; box-sizing: border-box; height: 60px; }
.tb { height: 20px; line-height: 18px; padding-left: 7px; box-sizing: border-box; background: linear-gradient(#ababab, #8f8f8f); border-bottom: 1px solid #333; color: #111; flex: 1; }
.btns .tb:last-child { border-bottom: 0; }
.origin { width: 126px; margin-top: 5px; border: 1px solid #3a3a3a; border-radius: 6px; position: relative; height: 22px; }
.orig-plus { position: absolute; right: 1px; top: 4px; width: 10px; height: 12px; background: #8a8a8a; border-radius: 3px; }
.sbar { width: 13px; margin: 5px 0 4px 4px; background: #636363; border-radius: 7px; flex: none; position: relative; box-shadow: inset 0 0 2px #4c4c4c; }
.sthumb { position: absolute; left: 0; right: 0; background: linear-gradient(90deg, #9a9a9a, #8a8a8a); border-radius: 7px; display: block; }
.st-tool { top: 0; height: 30px; }

.vp { flex: 1; background: #1b1b1b; position: relative; overflow: hidden; }
.vp-svg { position: absolute; left: 0; top: 0; }
.vp-t { position: absolute; left: 20px; top: 9px; color: #f2f2f2; z-index: 1; }
.vp-o { position: absolute; left: 70px; top: 114px; color: #f2f2f2; z-index: 1; }
.ax { position: absolute; font-size: 9px; z-index: 1; }
.ax-z { left: 28px; top: 74px; color: #1a2ad8; }
.ax-x { left: 53px; top: 99px; color: #c01010; }
.npanel { width: 180px; flex: none; background: #727272; display: flex; position: relative; overflow: hidden; }
.np-in { width: 158px; padding-left: 9px; margin-top: -8px; box-sizing: border-box; flex: none; }
.np-row { display: flex; }
.np-stack { width: 109px; border: 1px solid #3a3a3a; border-radius: 9px; overflow: hidden; box-sizing: border-box; flex: none; height: 60px; }
.np-stack .num { border: 0; border-radius: 0; border-bottom: 1px solid #333; flex: 1; height: auto; }
.np-stack .num:last-child { border-bottom: 0; }
.locks { margin-left: 9px; width: 27px; border: 1px solid #3a3a3a; border-radius: 4px; overflow: hidden; box-sizing: border-box; height: 60px; flex: none; }
.lk { flex: 1; background: linear-gradient(#aaa, #8f8f8f); border-bottom: 1px solid #444; display: flex; align-items: center; justify-content: center; overflow: hidden; min-height: 0; }
.lk:last-child { border-bottom: 0; }
.np-lbl { height: 22px; line-height: 26px; padding-left: 7px; }
.sb-n { margin: 5px 0 4px 9px; }
.st-n { top: 8px; height: 16px; background: #8e8e8e; }

.num { height: 20px; background: linear-gradient(#bcbcbc, #9a9a9a); border: 1px solid #3a3a3a; border-radius: 10px; box-sizing: border-box; position: relative; display: flex; align-items: center; justify-content: center; color: #111; flex: none; white-space: nowrap; overflow: hidden; }
.num::before, .num::after { content: ""; position: absolute; top: 50%; margin-top: -4px; border: 4px solid transparent; }
.num::before { left: 4px; border-right-color: #707070; border-left-width: 0; }
.num::after { right: 4px; border-left-color: #707070; border-right-width: 0; }
.num > span { position: relative; z-index: 1; }
.sl::before, .sl::after { display: none; }
.inl { border-radius: 0; border: 0; border-right: 1px solid #444; height: 100%; }
.inl:last-child { border-right: 0; }
.inl.grow { flex: 1; }
.numg { display: flex; height: 20px; border: 1px solid #3a3a3a; border-radius: 10px; overflow: hidden; box-sizing: border-box; flex: none; }

.img { flex: 1; min-height: 0; background: #343434; position: relative; display: flex; flex-direction: column; }
.img-bar { height: 21px; line-height: 22px; background: #2a2a2a; color: #f4f4f4; padding-left: 12px; flex: none; }
.img-c { flex: 1; display: flex; align-items: flex-start; padding: 71px 0 0 310px; min-height: 0; }
.result { display: block; }
.cplus { position: absolute; top: 25px; width: 9px; height: 9px; background: linear-gradient(#5e5e5e,#5e5e5e) center/9px 2px no-repeat, linear-gradient(#5e5e5e,#5e5e5e) center/2px 9px no-repeat; }
.cp-l { left: 2px; } .cp-r { right: 3px; }
.h-img { border-bottom: 1px solid #000; height: 27px; box-sizing: border-box; padding-top: 1px; }

.time { flex: none; height: 95px; display: flex; flex-direction: column; }
.tl { height: 52px; flex: none; position: relative; display: flex; background: #717171; }
.tl-dk { display: block; background: #454545; flex: none; }
.tl-a { width: 271px; } .tl-b { width: 154px; }
.tl-mid { flex: 1; display: block; }
.tl-grid { position: absolute; inset: 0; background-image: repeating-linear-gradient(90deg, rgba(0,0,0,.18) 0 1px, transparent 1px 23px, rgba(0,0,0,.07) 23px 24px, transparent 24px 46px); background-position: -6px 0; }
.tl-bar { position: absolute; left: 271px; width: 200px; top: 49px; height: 3px; background: #b53a2c; display: block; }
.tl-fade { position: absolute; left: 471px; width: 270px; top: 49px; height: 3px; background: rgba(170,60,50,.3); display: block; }
.tl-cur { position: absolute; left: 470px; width: 3px; top: 0; height: 52px; background: #5ac52a; display: block; }
.ruler-wrap { height: 16px; background: #6e6e6e; padding: 1px 6px 0 4px; box-sizing: border-box; flex: none; }
.ruler { height: 12px; background: linear-gradient(#a0a0a0, #8a8a8a); border: 1px solid #3a3a3a; border-radius: 7px; display: flex; overflow: hidden; padding-left: 13px; align-items: center; box-sizing: border-box; box-shadow: 0 1px 0 #5a5a5a; position: relative; }
.ruler::before { content: ""; position: absolute; left: 2px; top: 1px; width: 8px; height: 8px; border-radius: 50%; background: #777; }
.tick { flex: none; text-align: center; color: #111; line-height: 12px; font-size: 10.500px; }
.h-time { height: 27px; }
.ks { justify-content: flex-start; padding-left: 3px; }

.outl { height: 175px; flex: none; border-bottom: 1px solid #000; display: flex; flex-direction: column; box-sizing: content-box; background: #727272; overflow: hidden; }
.h-ol { height: 26px; }
.search { margin-left: 7px; flex: 1; height: 20px; background: linear-gradient(#9b9b9b, #bdbdbd); border: 1px solid #444; border-right: 0; border-radius: 4px 0 0 4px; box-sizing: border-box; display: flex; align-items: center; padding-left: 5px; }
.tree { flex: 1; position: relative; padding-top: 2px; min-height: 0; overflow: hidden; }
.tr { height: 20px; display: flex; align-items: center; position: relative; }
.tr:nth-child(even) { background: #6e6e6e; }
.tr.sel { background: linear-gradient(90deg, #7c868e, #7c868e 260px, transparent 260px); height: 19px; }
.tg { width: 12px; height: 12px; position: absolute; top: 4px; }
.lv0 .tg { left: 3px; }
.lv1 .tg { left: 28px; }
.br .tg { left: 22px; }
.lv0 > .main { margin-left: 23px; }
.lv1 > .main { margin-left: 42px; }
.tn { margin-left: 3px; color: #111; }
.tsep { display: block; width: 2px; height: 13px; background: #4d4d4d; margin: 0 8px 0 9px; }
.cols { position: absolute; right: 0; top: 0; bottom: 0; width: 75px; display: flex; background: linear-gradient(90deg, #5f5f5f 1px, transparent 1px 21px, #666 21px 22px, transparent 22px 41px, #666 41px 42px, transparent 42px); box-sizing: border-box; }
.colc { width: 21px; display: flex; align-items: center; justify-content: center; }
.c3 { width: 18px; }
.sb-o { position: absolute; right: 5px; top: 6px; width: 11px; bottom: 0; margin: 0; }
.st-o { top: 0; height: 87px; }
.lv1.br::before { content: ""; position: absolute; left: 28px; top: 10px; width: 16px; height: 1px; background: #3e3e3e; }
.tree::before { content: ""; position: absolute; left: 28px; top: 12px; width: 1px; bottom: 0; background: #3e3e3e; z-index: 1; }

.props { flex: 1; min-height: 0; position: relative; background: #727272; overflow: hidden; }
.h-pr { height: 25px; background: #6e6e6e; }
.tabs { width: 240px; }
.tab { width: 20px; }
.pp { padding-left: 8px; width: 303px; box-sizing: content-box; }
.r { display: flex; align-items: center; height: 20px; }
.k { color: #111; white-space: nowrap; }
.lr .k { width: 102px; padding-left: 8px; box-sizing: border-box; flex: none; }
.f-name { width: 201px; height: 20px; display: flex; }
.fld.f-name { border: 1px solid #3a3a3a; border-radius: 4px; padding-left: 7px; box-sizing: border-box; align-items: center; }
.ctr { justify-content: center; white-space: nowrap; overflow: hidden; }
.sec { border-top: 1px solid #4a4a4a; box-shadow: inset 0 1px 0 #7e7e7e; margin-left: -2px; padding-left: 2px; width: 307px; }
.s-em { margin-top: 13px; }
.s-ca { margin-top: 6px; }
.s-ve { margin-top: 7px; }
.sec-h { height: 24px; display: flex; align-items: center; gap: 3px; padding-left: 6px; font-size: 12px; color: #1a1a1a; position: relative; }
.sec-h .hatch-p { right: 3px; top: 3px; }
.cols2 { display: grid; grid-template-columns: 147px 148px; column-gap: 8px; width: 303px; }
.h39 { height: 39px; border: 1px solid #3a3a3a; border-radius: 10px; overflow: hidden; box-sizing: border-box; }
.h59 { height: 59px; border: 1px solid #3a3a3a; border-radius: 10px; overflow: hidden; box-sizing: border-box; }
.h39 .num, .h59 .num { flex: 1; height: auto; border: 0; border-radius: 0; border-bottom: 1px solid #222; }
.h39 .num:last-child, .h59 .num:last-child { border-bottom: 0; }
.lbl-r { padding-left: 8px; }
.rb { display: flex; height: 20px; border: 1px solid #3a3a3a; border-radius: 4px; overflow: hidden; box-sizing: border-box; width: 303px; }
.rb .seg { border-right: 1px solid #222; }
.rb .seg:last-child { border-right: 0; }
.chk { display: flex; align-items: center; height: 20px; padding-left: 3px; gap: 8px; color: #f0f0f0; white-space: nowrap; }
.box { display: block; width: 14px; height: 14px; border-radius: 4px; border: 1px solid #3a3a3a; box-sizing: border-box; background: linear-gradient(#3f3f3f, #5a5a5a); position: relative; flex: none; }
.on .box::after { content: ""; position: absolute; left: 3px; top: 0; width: 4px; height: 8px; border: solid #f2f2f2; border-width: 0 2px 2px 0; transform: rotate(40deg); }
.dkt { color: #111; }
.dis { opacity: .6; }
.sl-r { background: linear-gradient(90deg, #555 0 11px, transparent 11px), linear-gradient(#b4b4b4, #9e9e9e); }
.sl-j { background: linear-gradient(90deg, #4c4c4c 0, #555 78px, transparent 78px), linear-gradient(#b8b8b8, #9e9e9e); }
.sl-t { background: linear-gradient(90deg, #4c4c4c 0, #5a5a5a 77px, transparent 77px), linear-gradient(#b8b8b8, #a4a4a4); }
.list-r { display: flex; gap: 9px; }
.list { width: 275px; height: 65px; border: 1px solid #3c3c3c; border-radius: 4px; box-sizing: border-box; padding: 8px 5px 0; background: #707070; }
.li { height: 18px; background: #4f7ac6; display: flex; align-items: center; color: #111; padding-left: 3px; gap: 3px; }
.lf { height: 24px; margin-top: 7px; display: flex; align-items: center; position: relative; }
.lfp { width: 10px; height: 10px; margin-left: 3px; }
.grip { position: absolute; left: 133px; top: 11px; width: 14px; height: 3px; border-top: 1px solid #ddd; border-bottom: 1px solid #ddd; display: block; }
.pm { width: 19px; height: 40px; border: 1px solid #3c3c3c; border-radius: 5px; overflow: hidden; box-sizing: border-box; }
.pm .seg { border-right: 0; border-bottom: 1px solid #333; }
.pm .seg:last-child { border-bottom: 0; }
.f-cn { width: 198px; height: 20px; border: 1px solid #3a3a3a; border-radius: 4px; padding-left: 7px; box-sizing: border-box; display: flex; align-items: center; margin-left: 3px; }
.note { height: 20px; line-height: 20px; padding-left: 8px; margin-top: 5px; white-space: nowrap; }
.lr .k-c { width: 81px; }
.comp { width: 222px; }
.pb { height: 20px; line-height: 18px; text-align: center; background: linear-gradient(#ababab, #8e8e8e); border: 1px solid #3a3a3a; border-radius: 5px; box-sizing: border-box; white-space: nowrap; }
.kk { padding-left: 8px; }
.mt-l { margin-top: 9px; height: 20px; align-items: center; }
.vel { margin-top: 1px; }
.vel-l { display: flex; flex-direction: column; }
.mt-o { margin-top: 6px; }
.sb-p { position: absolute; left: 320px; top: 31px; bottom: 5px; width: 12px; margin: 0; }
.st-p { top: 54px; height: 363px; }
</style>
